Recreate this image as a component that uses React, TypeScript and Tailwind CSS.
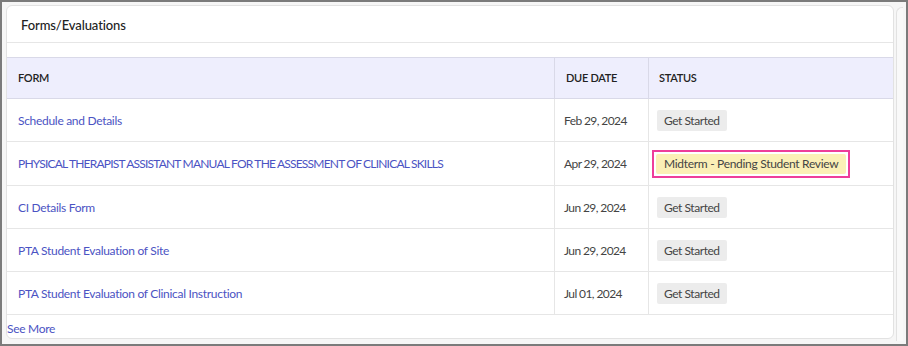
const forms = [
  { name: 'Schedule and Details', due: 'Feb 29, 2024', status: 'Get Started' },
  {
    name: 'PHYSICAL THERAPIST ASSISTANT MANUAL FOR THE ASSESSMENT OF CLINICAL SKILLS',
    due: 'Apr 29, 2024',
    status: 'Midterm - Pending Student Review',
    highlight: true,
  },
  { name: 'CI Details Form', due: 'Jun 29, 2024', status: 'Get Started' },
  { name: 'PTA Student Evaluation of Site', due: 'Jun 29, 2024', status: 'Get Started' },
  { name: 'PTA Student Evaluation of Clinical Instruction', due: 'Jul 01, 2024', status: 'Get Started' },
]

function StatusBadge({ label, highlight }: { label: string; highlight?: boolean }) {
  if (highlight) {
    return (
      <div className="ml-[3px] border-2 border-[#ee3d9a] px-[2px] py-[2px]">
        <span className="block h-[20px] rounded-[2px] bg-[#fbefb6] px-[8px] leading-[20px] text-[#444]">{label}</span>
      </div>
    )
  }
  return (
    <span className="ml-[8px] block h-[21px] rounded-[2px] bg-[#ececec] px-[7px] leading-[21px] tracking-[-0.45px] text-[#444]">
      {label}
    </span>
  )
}

export default function App() {
  return (
    <div
      className="flex h-[346px] w-[908px] border-2 border-[#7b7b7b] bg-[#f6f6f6] pl-[4px] pt-[3px] text-[12px] tracking-[-0.3px]"
      style={{ fontFamily: 'Lato, "Noto Sans", sans-serif' }}>
      <div className="flex h-[334px] w-[888px] flex-col rounded-md border border-[#e2e2e2] bg-white">
        <div className="flex h-[39px] items-center border-b border-[#e6e6e6] px-[14px] pt-[3px] text-[13px] font-medium tracking-[-0.1px] text-[#222]">
          Forms/Evaluations
        </div>
        <div className="h-[15px]" />
        <div className="grid grid-cols-[547px_94px_1fr]">
          <div className="flex h-[42px] items-center border-y border-[#d9d9e8] bg-[#eeeefd] pl-[11px] pt-[1px] text-[11px] font-semibold text-[#222]">
            FORM
          </div>
          <div className="flex h-[42px] items-center border-y border-l border-[#d9d9e8] bg-[#eeeefd] pl-[11px] pt-[1px] text-[11px] font-semibold text-[#222]">
            DUE DATE
          </div>
          <div className="flex h-[42px] items-center border-y border-l border-[#d9d9e8] bg-[#eeeefd] pl-[10px] pt-[1px] text-[11px] font-semibold text-[#222]">
            STATUS
          </div>
          {forms.map((f, i) => (
            <div key={f.name} className="contents">
              <div
                className={`flex items-center border-b border-[#e6e6e6] pl-[11px] pt-[1px] text-[#4b53c3] ${i === 1 ? 'h-[44px] tracking-[-0.8px]' : 'h-[43px]'}`}>
                {f.name}
              </div>
              <div className="flex items-center border-b border-l border-[#e6e6e6] pl-[9px] pt-[1px] tracking-[-0.6px] text-[#444]">
                {f.due}
              </div>
              <div className="flex items-center border-b border-l border-[#e6e6e6]">
                <StatusBadge label={f.status} highlight={f.highlight} />
              </div>
            </div>
          ))}
        </div>
        <div className="flex flex-1 items-center pt-[5px] text-[#4b53c3]">See More</div>
      </div>
      <div className="ml-[2px] mt-[2px] h-[334px] w-[7px] rounded-tl-md border-l border-t border-[#e2e2e2] bg-[#f9f9f9]" />
    </div>
  )
}
